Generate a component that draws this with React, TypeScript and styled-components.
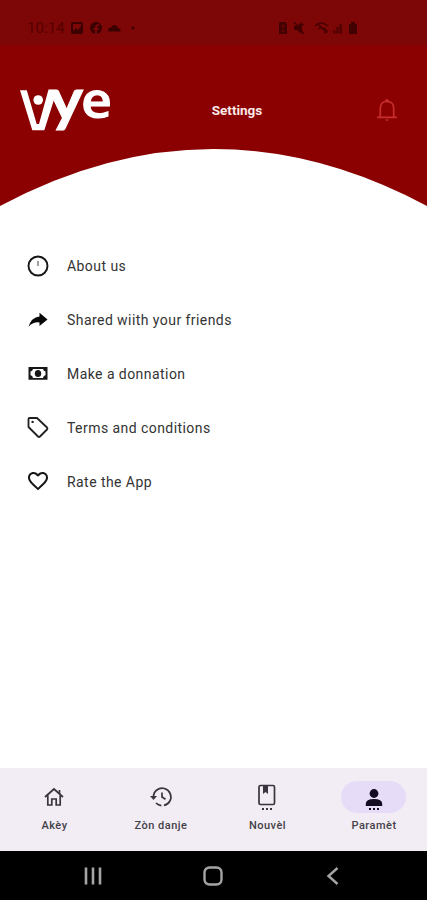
import React from "react";
import styled, { createGlobalStyle } from "styled-components";

const GlobalStyle = createGlobalStyle`
  * { box-sizing: border-box; }
  body { margin: 0; background: #fff; font-family: Roboto, "Liberation Sans", sans-serif; }
`;

const Screen = styled.div`
  width: 427px;
  height: 900px;
  display: flex;
  flex-direction: column;
  background: #fff;
  overflow: hidden;
`;

const StatusBar = styled.div`
  height: 45px;
  flex: none;
  display: flex;
  justify-content: space-between;
  align-items: center;
  padding: 10px 68px 0 27px;
  background: #7d0606;
  color: #540000;
`;

const StatusGroup = styled.div`
  display: flex;
  align-items: center;
`;

const Clock = styled.span`
  width: 43px;
  font-size: 15px;
  letter-spacing: 0.1px;
  line-height: 18px;
`;

const Header = styled.header`
  height: 104px;
  flex: none;
  display: grid;
  grid-template-columns: 142px 1fr 142px;
  align-items: start;
  background: #8b0000;
`;

const LogoSlot = styled.div`
  padding: 10px 0 0 17px;
  svg { display: block; }
`;

const Title = styled.h1`
  margin: 56px 0 0 47px;
  text-align: center;
  font-size: 13.5px;
  line-height: 18px;
  font-weight: 700;
  color: #f9e9e9;
`;

const BellSlot = styled.div`
  display: flex;
  justify-content: flex-end;
  padding: 52px 27px 0 0;
`;

const Curve = styled.svg`
  display: block;
  flex: none;
  background: #8b0000;
`;

const List = styled.ul`
  margin: 0;
  padding: 33px 0 0 26px;
  list-style: none;
  flex: 1;
`;

const Item = styled.li`
  height: 54px;
  display: flex;
  align-items: center;
  gap: 17px;

  &:last-child svg { margin-top: -2px; }
`;

const ItemText = styled.span`
  font-size: 14px;
  line-height: 20px;
  color: #333;
  letter-spacing: 0.44px;
`;

const TabBar = styled.nav`
  height: 83px;
  flex: none;
  display: grid;
  grid-template-columns: repeat(4, 1fr);
  padding: 13px 0 0 1px;
  background: #f2edf4;
`;

const Tab = styled.div`
  display: flex;
  flex-direction: column;
  align-items: center;
`;

const Pill = styled.div<{ $active?: boolean }>`
  width: 65px;
  height: 32px;
  border-radius: 16px;
  display: grid;
  place-items: center;
  background: ${(p) => (p.$active ? "#e7dcf8" : "transparent")};
`;

const TabLabel = styled.span`
  margin: 5px -0.5px 0 0;
  font-size: 11px;
  line-height: 15px;
  font-weight: 500;
  color: #444047;
  letter-spacing: 0.5px;
`;

const SystemBar = styled.div`
  height: 49px;
  flex: none;
  display: grid;
  grid-template-columns: 120px 120px 120px;
  justify-content: start;
  padding-left: 33px;
  align-items: center;
  justify-items: center;
  background: #000;
`;

const NotificationIcons = () => (
  <svg width="68" height="14" viewBox="0 0 68 14" fill="#3d0000">
    <path fillRule="evenodd" d="M3 1h8q2 0 2 2v8q0 2-2 2H3q-2 0-2-2V3q0-2 2-2Zm0 2v7l3-3 2 2 3-4V3Z" />
    <circle cx="26" cy="7" r="6" />
    <path d="M26 13V6q0-2 3-2M23.5 8h5" stroke="#7d0606" strokeWidth="1.8" fill="none" />
    <path d="M38 10.500q-.5-4 3-4Q42.500 3 45.500 4.200q2 .8 2.300 2.500 3 .5 2.700 3.800Z" />
    <circle cx="63" cy="7" r="1.5" />
  </svg>
);

const DeviceIcons = () => (
  <svg width="82" height="14" viewBox="0 0 82 14" fill="#430000">
    <path d="M2.500 1h6l1.500 2v10H2V3Z" />
    <path d="m4 5 2-2 2 2-2 2Zm0 5 2-2 2 2-2 2Z" fill="#7d0606" fillOpacity=".55" />
    <path d="M17 5h3l5-4v12l-5-4h-3Z" />
    <path d="m17 1 10 12M21 7l6-4" stroke="#430000" strokeWidth="1.2" />
    <path d="M38 5q6-6 13 0M41 8q4-3 7 0M40 2l10 10M47 7l3 3-3 2" stroke="#4a0000" strokeWidth="1.5" fill="none" />
    <path d="M56 12.500v-3h2.500v3Zm3.200 0V6h2.500v6.500Zm3.200 0V3h2.500v9.500Z" fillOpacity=".75" />
    <path d="M72 3h2V1h4v2h2v10h-8Z" />
  </svg>
);

const Logo = () => (
  <svg width="98" height="80" viewBox="17 55 98 80" fill="#fff" stroke="#fff">
    <path stroke="none" d="M20 90.300h6.800L36.700 124h2.300L48.300 90.300H57L44.300 130.300H32.300Z" />
    <circle stroke="none" cx="38.200" cy="100" r="4.800" />
    <text x="49" y="119.500" strokeWidth="1" fontFamily="Lato, sans-serif" fontWeight="700" fontSize="57" textLength="34" lengthAdjust="spacingAndGlyphs">y</text>
    <text x="81" y="118" strokeWidth="0.900" fontFamily="'Open Sans', sans-serif" fontWeight="600" fontSize="49" textLength="31" lengthAdjust="spacingAndGlyphs">e</text>
  </svg>
);

const BellIcon = () => (
  <svg width="26" height="26" viewBox="0 0 26 26" fill="none" stroke="#c72f2f" strokeWidth="1.700">
    <path d="M3 20.300h20M6.300 20V11.500q0-7 6.700-7t6.700 7V20" />
    <path d="M11.500 4.500V3.300q1.500-1.500 3 0v1.200Z" fill="#c72f2f" strokeWidth="1" />
    <path d="M11 22.500h4q-2 2.800-4 0Z" fill="#c72f2f" stroke="none" />
  </svg>
);

const AboutIcon = () => (
  <svg width="24" height="24" viewBox="0 0 24 24" fill="none" stroke="#151515">
    <circle cx="12" cy="12" r="9.500" strokeWidth="1.900" />
    <path d="M12 7v5" stroke="#777" strokeWidth="1.400" />
  </svg>
);

const ShareIcon = () => (
  <svg width="24" height="24" viewBox="0 0 24 24" fill="#080808">
    <path d="M13.500 4.800 21.500 11.500 13.500 18v-3.600Q6.500 13.800 2.500 19 5 9.500 13.500 8.500Z" />
  </svg>
);

const MoneyIcon = () => (
  <svg width="24" height="24" viewBox="0 0 24 24" fill="#171717">
    <path fillRule="evenodd" d="M2.500 5h19v12.800h-19ZM7 7Q6.500 9.200 4.500 9.500v3.800q2 .4 2.500 2.600h10q.5-2.200 2.500-2.600V9.500q-2-.3-2.500-2.500Z" />
    <ellipse cx="12" cy="11.500" rx="3.200" ry="3.600" />
  </svg>
);

const TagIcon = () => (
  <svg width="24" height="24" viewBox="0 0 24 24" fill="none" stroke="#202020" strokeWidth="1.800" strokeLinejoin="round">
    <path d="M2.500 3q0-1 1-1H11l10 9.500q1 1 0 2l-7 7q-1 1-2 0L2.500 11Z" />
    <circle cx="6.600" cy="5.900" r="1.200" fill="#202020" stroke="none" />
  </svg>
);

const HeartIcon = () => (
  <svg width="24" height="24" viewBox="0 0 24 24" fill="#151515">
    <path d="m12 21.350-1.450-1.320C5.400 15.360 2 12.280 2 8.500 2 5.420 4.420 3 7.500 3c1.740 0 3.410.81 4.500 2.090C13.090 3.810 14.760 3 16.500 3 19.580 3 22 5.420 22 8.500c0 3.780-3.400 6.860-8.550 11.540ZM7.500 5C5.500 5 4 6.500 4 8.500c0 2.890 3.140 5.740 8 10.150 4.860-4.410 8-7.260 8-10.150C20 6.500 18.500 5 16.500 5c-1.540 0-3.040.99-3.560 2.360h-1.870C10.540 5.990 9.040 5 7.500 5Z" fillRule="evenodd" />
  </svg>
);

const HomeIcon = () => (
  <svg width="22" height="22" viewBox="0 0 22 22" fill="none" stroke="#39343d" strokeWidth="1.700">
    <path d="m2 11 9-8 9 8M4.800 9v10h4v-6h4.400v6h4V9" />
    <path d="M16.500 4v4" />
  </svg>
);

const HistoryIcon = () => (
  <svg width="24" height="24" viewBox="0 0 24 24" fill="none" stroke="#39343d" strokeWidth="1.700">
    <path d="M4.500 12a8.700 8.700 0 1 1 2.500 6" strokeDasharray="39 2.500 20" />
    <path d="M13 7.500V12l3.500 2.300" />
    <path d="M1 11h7l-3.500 4Z" fill="#39343d" stroke="none" />
  </svg>
);

const BookIcon = () => (
  <svg width="22" height="28" viewBox="0 0 22 28" fill="none" stroke="#39343d" strokeWidth="1.700">
    <rect x="3" y="2.500" width="15.500" height="19" rx="1.500" />
    <path d="M7 3h5v8l-2.500-2L7 11Z" fill="#39343d" stroke="none" />
    <path d="M6 26h2m2 0h2m2 0h2" strokeWidth="1.800" />
  </svg>
);

const PersonIcon = () => (
  <svg width="22" height="28" viewBox="0 0 22 28" fill="#120b22">
    <circle cx="11" cy="10.500" r="4.400" />
    <path d="M2.800 23v-2.200q0-4.800 8.200-4.800t8.200 4.800V23Z" />
    <path d="M6 26h2m2 0h2m2 0h2" stroke="#120b22" strokeWidth="1.800" />
  </svg>
);

const RecentsIcon = () => (
  <svg width="20" height="20" viewBox="0 0 20 20" stroke="#a5a5a5" strokeWidth="2.600">
    <path d="M3 1.500v17M10 1.500v17M17 1.500v17" />
  </svg>
);

const HomeKeyIcon = () => (
  <svg width="20" height="20" viewBox="0 0 20 20" fill="none" stroke="#a5a5a5" strokeWidth="2.400">
    <rect x="1.500" y="1.500" width="17" height="17" rx="5" />
  </svg>
);

const BackIcon = () => (
  <svg width="20" height="20" viewBox="0 0 20 20" fill="none" stroke="#a5a5a5" strokeWidth="2.400">
    <path d="m14.500 2-9 8 9 8" />
  </svg>
);

const items = [
  { label: "About us", Icon: AboutIcon },
  { label: "Shared wiith your friends", Icon: ShareIcon },
  { label: "Make a donnation", Icon: MoneyIcon },
  { label: "Terms and conditions", Icon: TagIcon },
  { label: "Rate the App", Icon: HeartIcon },
];

const tabs = [
  { label: "Akèy", Icon: HomeIcon },
  { label: "Zòn danje", Icon: HistoryIcon },
  { label: "Nouvèl", Icon: BookIcon },
  { label: "Paramèt", Icon: PersonIcon, active: true },
];

export default function App() {
  return (
    <Screen>
      <GlobalStyle />
      <StatusBar>
        <StatusGroup>
          <Clock>10:14</Clock>
          <NotificationIcons />
        </StatusGroup>
        <StatusGroup>
          <DeviceIcons />
        </StatusGroup>
      </StatusBar>
      <Header>
        <LogoSlot><Logo /></LogoSlot>
        <Title>Settings</Title>
        <BellSlot><BellIcon /></BellSlot>
      </Header>
      <Curve width="427" height="57" viewBox="0 0 427 57">
        <path d="M0 57Q213.500-57 427 57Z" fill="#fff" />
      </Curve>
      <List>
        {items.map(({ label, Icon }) => (
          <Item key={label}>
            <Icon />
            <ItemText>{label}</ItemText>
          </Item>
        ))}
      </List>
      <TabBar>
        {tabs.map(({ label, Icon, active }) => (
          <Tab key={label}>
            <Pill $active={active}><Icon /></Pill>
            <TabLabel>{label}</TabLabel>
          </Tab>
        ))}
      </TabBar>
      <SystemBar>
        <RecentsIcon />
        <HomeKeyIcon />
        <BackIcon />
      </SystemBar>
    </Screen>
  );
}
